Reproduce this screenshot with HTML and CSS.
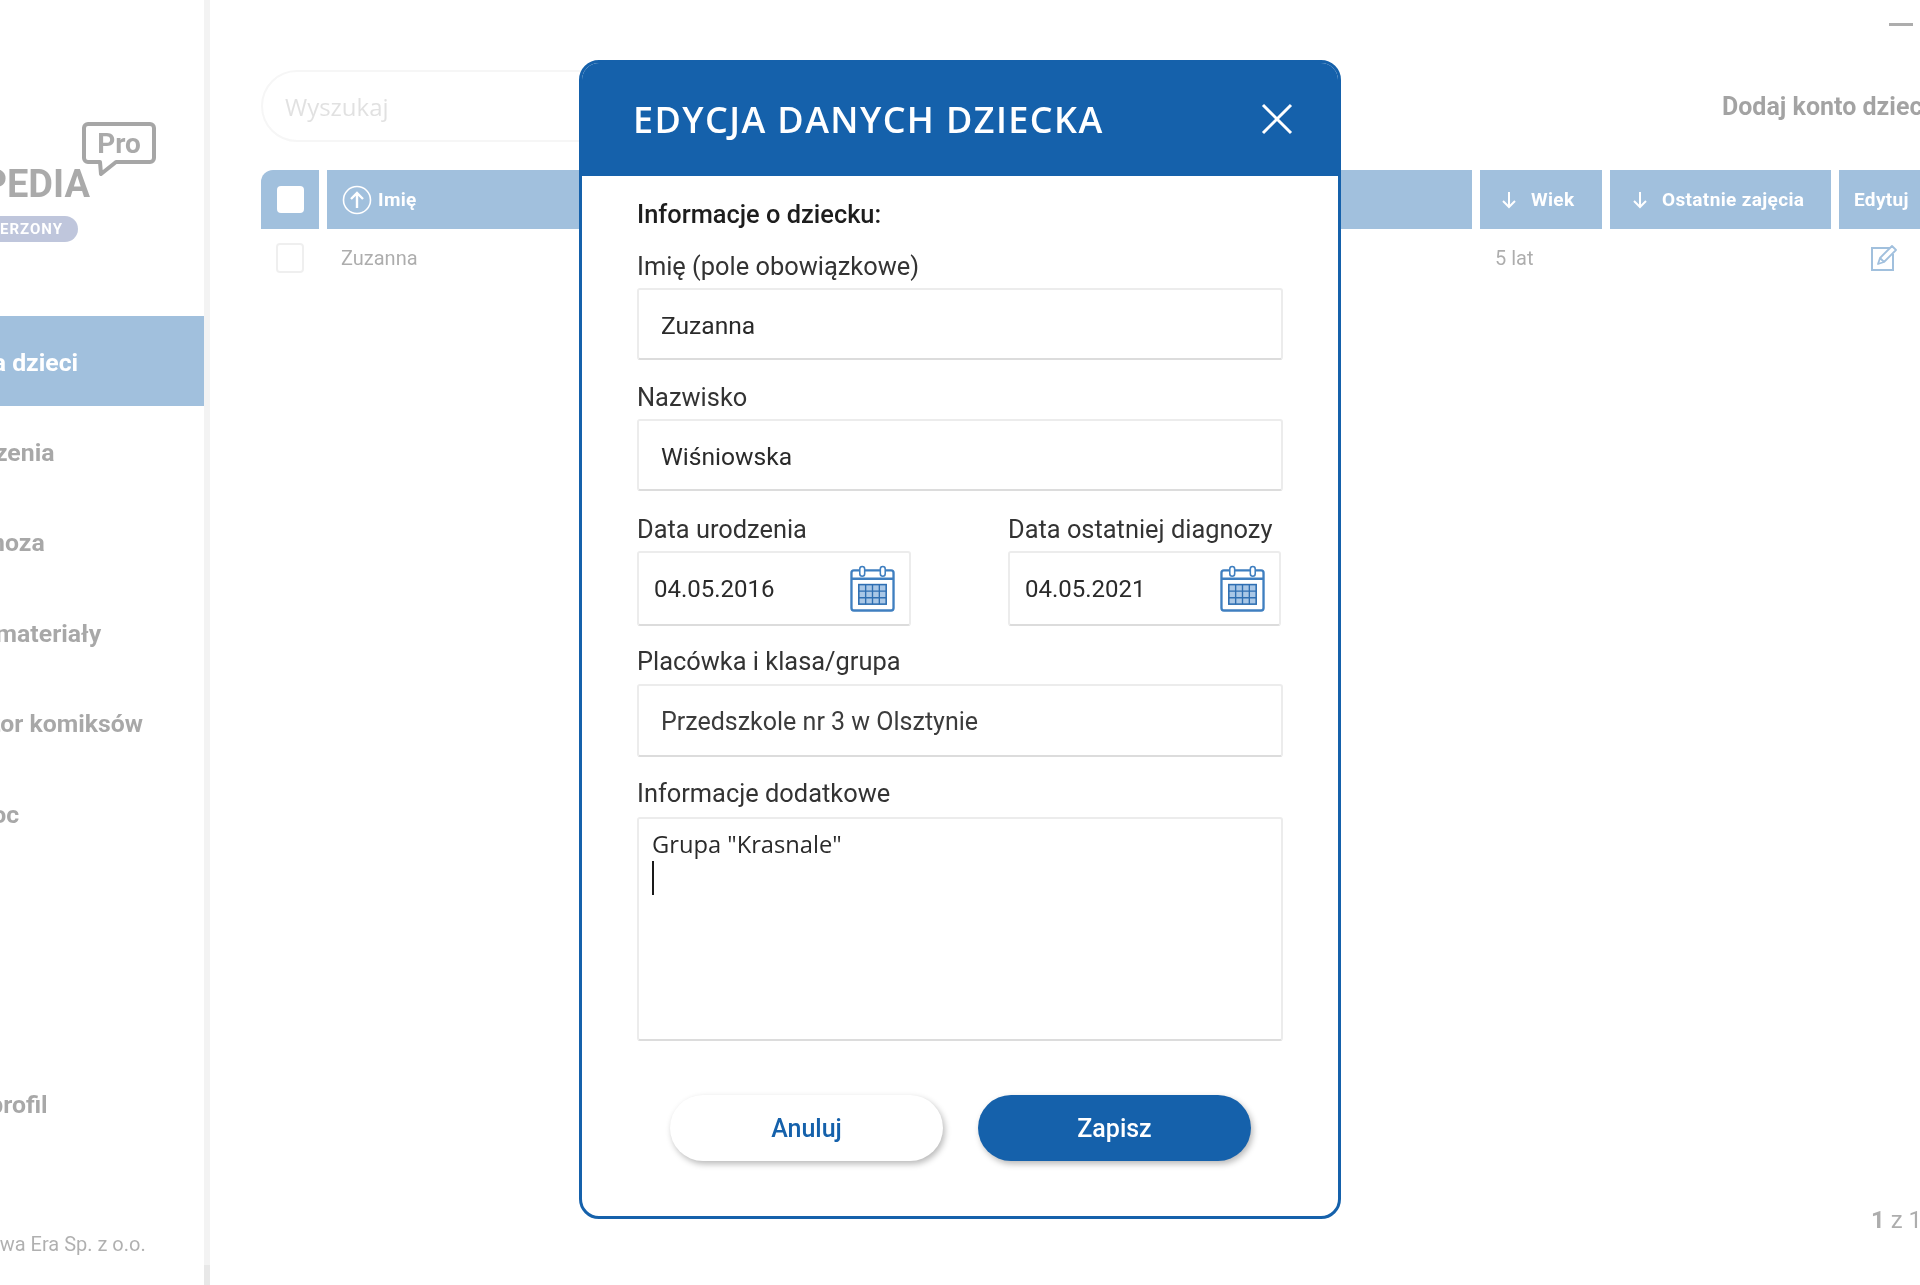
FILE: index.html
```html
<!DOCTYPE html>
<html lang="pl">
<head>
<meta charset="utf-8">
<title>Edycja danych dziecka</title>
<link rel="stylesheet" href="styles.css">
</head>
<body>
<div class="screen">
  <div class="app">
    <aside class="sidebar">
      <div class="logo">
        <div class="logo-word">LOGOPEDIA</div>
        <svg class="logo-bubble" width="76" height="56" viewBox="0 0 76 56">
          <path d="M7 2h62a4 4 0 0 1 4 4v30a4 4 0 0 1-4 4H35L20 52l-1-12H7a4 4 0 0 1-4-4V6a4 4 0 0 1 4-4z" fill="#fff" stroke="#222" stroke-width="4" stroke-linejoin="round"/>
          <text x="38" y="31" text-anchor="middle" class="logo-pro">Pro</text>
        </svg>
        <div class="logo-badge"><span>ERZONY</span></div>
      </div>
      <nav class="nav">
        <div class="nav-item is-active"><span>Konta dzieci</span></div>
        <div class="nav-item"><span>Ćwiczenia</span></div>
        <div class="nav-item"><span>Diagnoza</span></div>
        <div class="nav-item"><span>Inne materiały</span></div>
        <div class="nav-item"><span>Kreator komiksów</span></div>
        <div class="nav-item"><span>Pomoc</span></div>
        <div class="nav-item nav-profile"><span>Mój profil</span></div>
      </nav>
      <div class="copyright"><span>Nowa Era Sp. z o.o.</span></div>
    </aside>
    <div class="edge"></div>
    <main class="main">
      <div class="topbar"><span class="dash"></span></div>
      <div class="toolbar">
        <div class="search">Wyszukaj</div>
        <div class="add-link">Dodaj konto dziecka</div>
      </div>
      <div class="table">
        <div class="th th-check"><span class="check-white"></span></div>
        <div class="th th-name">
          <svg width="30" height="30" viewBox="0 0 30 30"><circle cx="15" cy="15" r="13.5" fill="none" stroke="#fff" stroke-width="1.6"/><path d="M15 23V8M9 14l6-6 6 6" fill="none" stroke="#fff" stroke-width="2.4"/></svg>
          <span>Imię</span>
        </div>
        <div class="th th-age">
          <svg width="16" height="18" viewBox="0 0 16 18"><path d="M8 1v15M2 10l6 6 6-6" fill="none" stroke="#fff" stroke-width="2"/></svg>
          <span>Wiek</span>
        </div>
        <div class="th th-last">
          <svg width="16" height="18" viewBox="0 0 16 18"><path d="M8 1v15M2 10l6 6 6-6" fill="none" stroke="#fff" stroke-width="2"/></svg>
          <span>Ostatnie zajęcia</span>
        </div>
        <div class="th th-edit"><span>Edytuj</span></div>

        <div class="td td-check"><span class="check-empty"></span></div>
        <div class="td td-name">Zuzanna</div>
        <div class="td td-age">5 lat</div>
        <div class="td"></div>
        <div class="td td-edit">
          <svg width="28" height="28" viewBox="0 0 28 28"><path d="M20 4H2v22h21V10" fill="none" stroke="#1561ab" stroke-width="2"/><path d="M8 20l2-6L22 2l4 4-12 12zM10 14l4 4" fill="none" stroke="#1561ab" stroke-width="1.8" stroke-linejoin="round"/></svg>
        </div>
      </div>
      <div class="pagination"><b>1</b> z 1</div>
    </main>
  </div>

  <div class="overlay"></div>

  <section class="modal">
    <header class="modal-head">
      <h1 class="modal-title">EDYCJA DANYCH DZIECKA</h1>
      <svg class="modal-close" width="32" height="32" viewBox="0 0 32 32"><path d="M2 2l28 28M30 2L2 30" stroke="#fff" stroke-width="3" fill="none"/></svg>
    </header>
    <div class="modal-body">
      <div class="section-title">Informacje o dziecku:</div>
      <div class="field field-first">
        <div class="label">Imię (pole obowiązkowe)</div>
        <div class="input">Zuzanna</div>
      </div>
      <div class="field">
        <div class="label">Nazwisko</div>
        <div class="input">Wiśniowska</div>
      </div>
      <div class="date-row">
        <div class="field-date">
          <div class="label">Data urodzenia</div>
          <div class="input input-date">
            <span>04.05.2016</span>
            <svg class="cal" width="45" height="47" viewBox="0 0 46 48">
              <rect x="1.5" y="5.5" width="43" height="41" rx="2.5" fill="#fff" stroke="#3f7fc0" stroke-width="2.4"/>
              <path d="M1.5 14h43" stroke="#3f7fc0" stroke-width="2.4"/>
              <rect x="10" y="1.5" width="5" height="10" rx="2.5" fill="#fff" stroke="#3f7fc0" stroke-width="1.6"/>
              <rect x="31" y="1.5" width="5" height="10" rx="2.5" fill="#fff" stroke="#3f7fc0" stroke-width="1.6"/>
              <rect x="9" y="20" width="28" height="20" fill="#a9c7e6" stroke="#2f6fb2" stroke-width="1.6"/>
              <path d="M16 20v20M23 20v20M30 20v20M9 26.7h28M9 33.4h28" stroke="#2f6fb2" stroke-width="1.4"/>
            </svg>
          </div>
        </div>
        <div class="field-date">
          <div class="label">Data ostatniej diagnozy</div>
          <div class="input input-date">
            <span>04.05.2021</span>
            <svg class="cal" width="45" height="47" viewBox="0 0 46 48">
              <rect x="1.5" y="5.5" width="43" height="41" rx="2.5" fill="#fff" stroke="#3f7fc0" stroke-width="2.4"/>
              <path d="M1.5 14h43" stroke="#3f7fc0" stroke-width="2.4"/>
              <rect x="10" y="1.5" width="5" height="10" rx="2.5" fill="#fff" stroke="#3f7fc0" stroke-width="1.6"/>
              <rect x="31" y="1.5" width="5" height="10" rx="2.5" fill="#fff" stroke="#3f7fc0" stroke-width="1.6"/>
              <rect x="9" y="20" width="28" height="20" fill="#a9c7e6" stroke="#2f6fb2" stroke-width="1.6"/>
              <path d="M16 20v20M23 20v20M30 20v20M9 26.7h28M9 33.4h28" stroke="#2f6fb2" stroke-width="1.4"/>
            </svg>
          </div>
        </div>
      </div>
      <div class="field field-place">
        <div class="label">Placówka i klasa/grupa</div>
        <div class="input input-place">Przedszkole nr 3 w Olsztynie</div>
      </div>
      <div class="field field-notes">
        <div class="label">Informacje dodatkowe</div>
        <div class="textarea">
          <div>Grupa "Krasnale"</div>
          <span class="caret"></span>
        </div>
      </div>
      <div class="actions">
        <div class="btn btn-cancel">Anuluj</div>
        <div class="btn btn-save">Zapisz</div>
      </div>
    </div>
  </section>
</div>
</body>
</html>
```

FILE: styles.css
```css
* { box-sizing: border-box; }

html, body {
  margin: 0;
  padding: 0;
  background: #fff;
}

.screen {
  position: relative;
  width: 1920px;
  height: 1285px;
  overflow: hidden;
  font-family: Roboto, "Liberation Sans", sans-serif;
  filter: blur(0.6px);
}

.app {
  display: flex;
  width: 100%;
  height: 100%;
  background: #fff;
}

/* sidebar */
.sidebar {
  width: 204px;
  flex: none;
  display: flex;
  flex-direction: column;
  overflow: hidden;
  background: #fff;
}

.edge {
  width: 6px;
  flex: none;
  background: linear-gradient(#e0e0e0 1265px, #c6c6c6 1265px);
}

.logo {
  position: relative;
  height: 316px;
  padding-top: 166px;
  flex: none;
}

.logo-word {
  width: 90px;
  display: flex;
  justify-content: flex-end;
  white-space: nowrap;
  font-size: 38px;
  line-height: 36px;
  font-weight: 700;
  color: #2b2b2b;
}

.logo-bubble {
  position: absolute;
  left: 81px;
  top: 122px;
}

.logo-pro {
  font-family: Roboto, sans-serif;
  font-size: 28px;
  font-weight: 700;
  fill: #2b2b2b;
}

.logo-badge {
  width: 78px;
  height: 26px;
  margin-top: 14px;
  padding-right: 15px;
  display: flex;
  justify-content: flex-end;
  align-items: center;
  white-space: nowrap;
  border-radius: 0 13px 13px 0;
  background: #5f72a8;
  color: #fff;
  font-size: 15px;
  font-weight: 700;
  letter-spacing: 1px;
}

.nav {
  display: flex;
  flex-direction: column;
}

.nav-item {
  height: 90.4px;
  padding-top: 2px;
  display: flex;
  align-items: center;
  white-space: nowrap;
  font-size: 24.8px;
  font-weight: 700;
  color: #262626;
}

.nav-item span {
  margin-left: -59px;
}

.nav-item.is-active {
  background: #1561ab;
  color: #fff;
}

.nav-profile {
  margin-top: 200px;
}

.copyright {
  margin-top: auto;
  padding-bottom: 29px;
  font-size: 20px;
  line-height: 24px;
  color: #3a3a3a;
  white-space: nowrap;
}

.copyright span {
  margin-left: -26px;
}

/* main */
.main {
  flex: 1;
  min-width: 0;
  display: flex;
  flex-direction: column;
  padding-left: 51px;
  overflow: hidden;
}

.topbar {
  height: 70px;
  flex: none;
  display: flex;
  padding-top: 23px;
  padding-left: 1628px;
}

.dash {
  width: 24px;
  height: 3px;
  background: #333;
}

.toolbar {
  height: 72px;
  flex: none;
  display: flex;
  align-items: center;
  justify-content: space-between;
  width: 1798px;
}

.search {
  width: 560px;
  height: 72px;
  padding-left: 22px;
  display: flex;
  align-items: center;
  border: 2px solid #e8e8e8;
  border-radius: 36px;
  font-family: "Open Sans", sans-serif;
  font-size: 24px;
  color: #b5b5b5;
}

.add-link {
  width: 337px;
  white-space: nowrap;
  font-size: 25px;
  font-weight: 700;
  color: #1a1a1a;
}

.table {
  margin-top: 28px;
  width: 1760px;
  flex: none;
  display: grid;
  grid-template-columns: 58px 1145px 122px 221px 100px;
  grid-template-rows: 59px 58px;
  column-gap: 8px;
}

.th {
  display: flex;
  align-items: center;
  background: #1561ab;
  color: #fff;
  font-size: 19px;
  font-weight: 700;
  letter-spacing: 0.35px;
}

.th-check {
  justify-content: center;
  border-radius: 12px 0 0 0;
}

.check-white {
  width: 27px;
  height: 27px;
  border-radius: 4px;
  background: #fff;
}

.th-name {
  padding-left: 15px;
  gap: 6px;
}

.th-age {
  padding-left: 21px;
  gap: 14px;
}

.th-last {
  padding-left: 22px;
  gap: 14px;
}

.th-edit {
  padding-left: 15px;
}

.td {
  display: flex;
  align-items: center;
  font-size: 20px;
  color: #333;
}

.td-check {
  justify-content: center;
}

.check-empty {
  width: 28px;
  height: 30px;
  border: 2px solid #d8d8d8;
  border-radius: 4px;
}

.td-name {
  padding-left: 14px;
}

.td-age {
  padding-left: 15px;
}

.td-edit {
  padding-left: 31px;
}

.pagination {
  margin-top: auto;
  padding-left: 1610px;
  padding-bottom: 51px;
  font-size: 24px;
  line-height: 28px;
  color: #333;
  white-space: nowrap;
}

/* overlay + modal */
.overlay {
  position: absolute;
  inset: 0;
  background: rgba(255, 255, 255, 0.6);
}

.modal {
  position: absolute;
  left: 579px;
  top: 60px;
  width: 762px;
  height: 1159px;
  background: #fff;
  border: 3px solid #1561ab;
  border-radius: 20px;
  overflow: hidden;
}

.modal-head {
  height: 113px;
  display: flex;
  align-items: center;
  justify-content: space-between;
  background: #1561ab;
  padding: 0 45px 0 51px;
}

.modal-title {
  margin: 0;
  font-family: "Open Sans", sans-serif;
  font-size: 36px;
  font-weight: 600;
  letter-spacing: 1.4px;
  color: #fff;
  white-space: nowrap;
}

.modal-close {
  margin-top: -2px;
}

.modal-body {
  padding: 23px 55px 0 55px;
}

.section-title {
  font-size: 25.4px;
  line-height: 30px;
  font-weight: 500;
  color: #1d1d1d;
}

.field {
  margin-top: 22px;
}

.field-first {
  margin-top: 22px;
}

.label {
  font-size: 25.4px;
  line-height: 30px;
  color: #333;
  white-space: nowrap;
}

.input {
  height: 72px;
  margin-top: 7px;
  padding: 2px 0 0 22px;
  display: flex;
  align-items: center;
  background: #fff;
  border: 2px solid #ececec;
  border-bottom-color: #dcdcdc;
  border-radius: 3px;
  font-size: 24.6px;
  color: #2a2a2a;
}

.date-row {
  margin-top: 23px;
  margin-right: 2px;
  display: grid;
  grid-template-columns: 274px 273px;
  justify-content: space-between;
}

.input-date {
  height: 75px;
  padding: 0 14px 0 15px;
  font-size: 24px;
  justify-content: space-between;
}

.field-place {
  margin-top: 20px;
}

.input-place {
  height: 73px;
  margin-top: 8px;
  font-size: 25px;
  color: #3c3c3c;
}

.field-notes {
  margin-top: 21px;
}

.textarea {
  height: 224px;
  margin-top: 9px;
  padding: 9px 13px;
  background: #fff;
  border: 2px solid #ececec;
  border-bottom-color: #dcdcdc;
  border-radius: 3px;
  font-family: "Open Sans", sans-serif;
  font-size: 23.7px;
  line-height: 33px;
  color: #2a2a2a;
}

.caret {
  display: block;
  width: 2px;
  height: 34px;
  background: #1a1a1a;
}

.actions {
  margin-top: 54px;
  padding-left: 33px;
  display: flex;
  gap: 35px;
}

.btn {
  width: 273px;
  height: 66px;
  display: flex;
  align-items: center;
  justify-content: center;
  border-radius: 33px;
  font-size: 25px;
  font-weight: 500;
  box-shadow: 2px 3px 6px rgba(0, 0, 0, 0.28);
}

.btn-cancel {
  background: #fff;
  color: #1561ab;
}

.btn-save {
  background: #1561ab;
  color: #fff;
}
```
